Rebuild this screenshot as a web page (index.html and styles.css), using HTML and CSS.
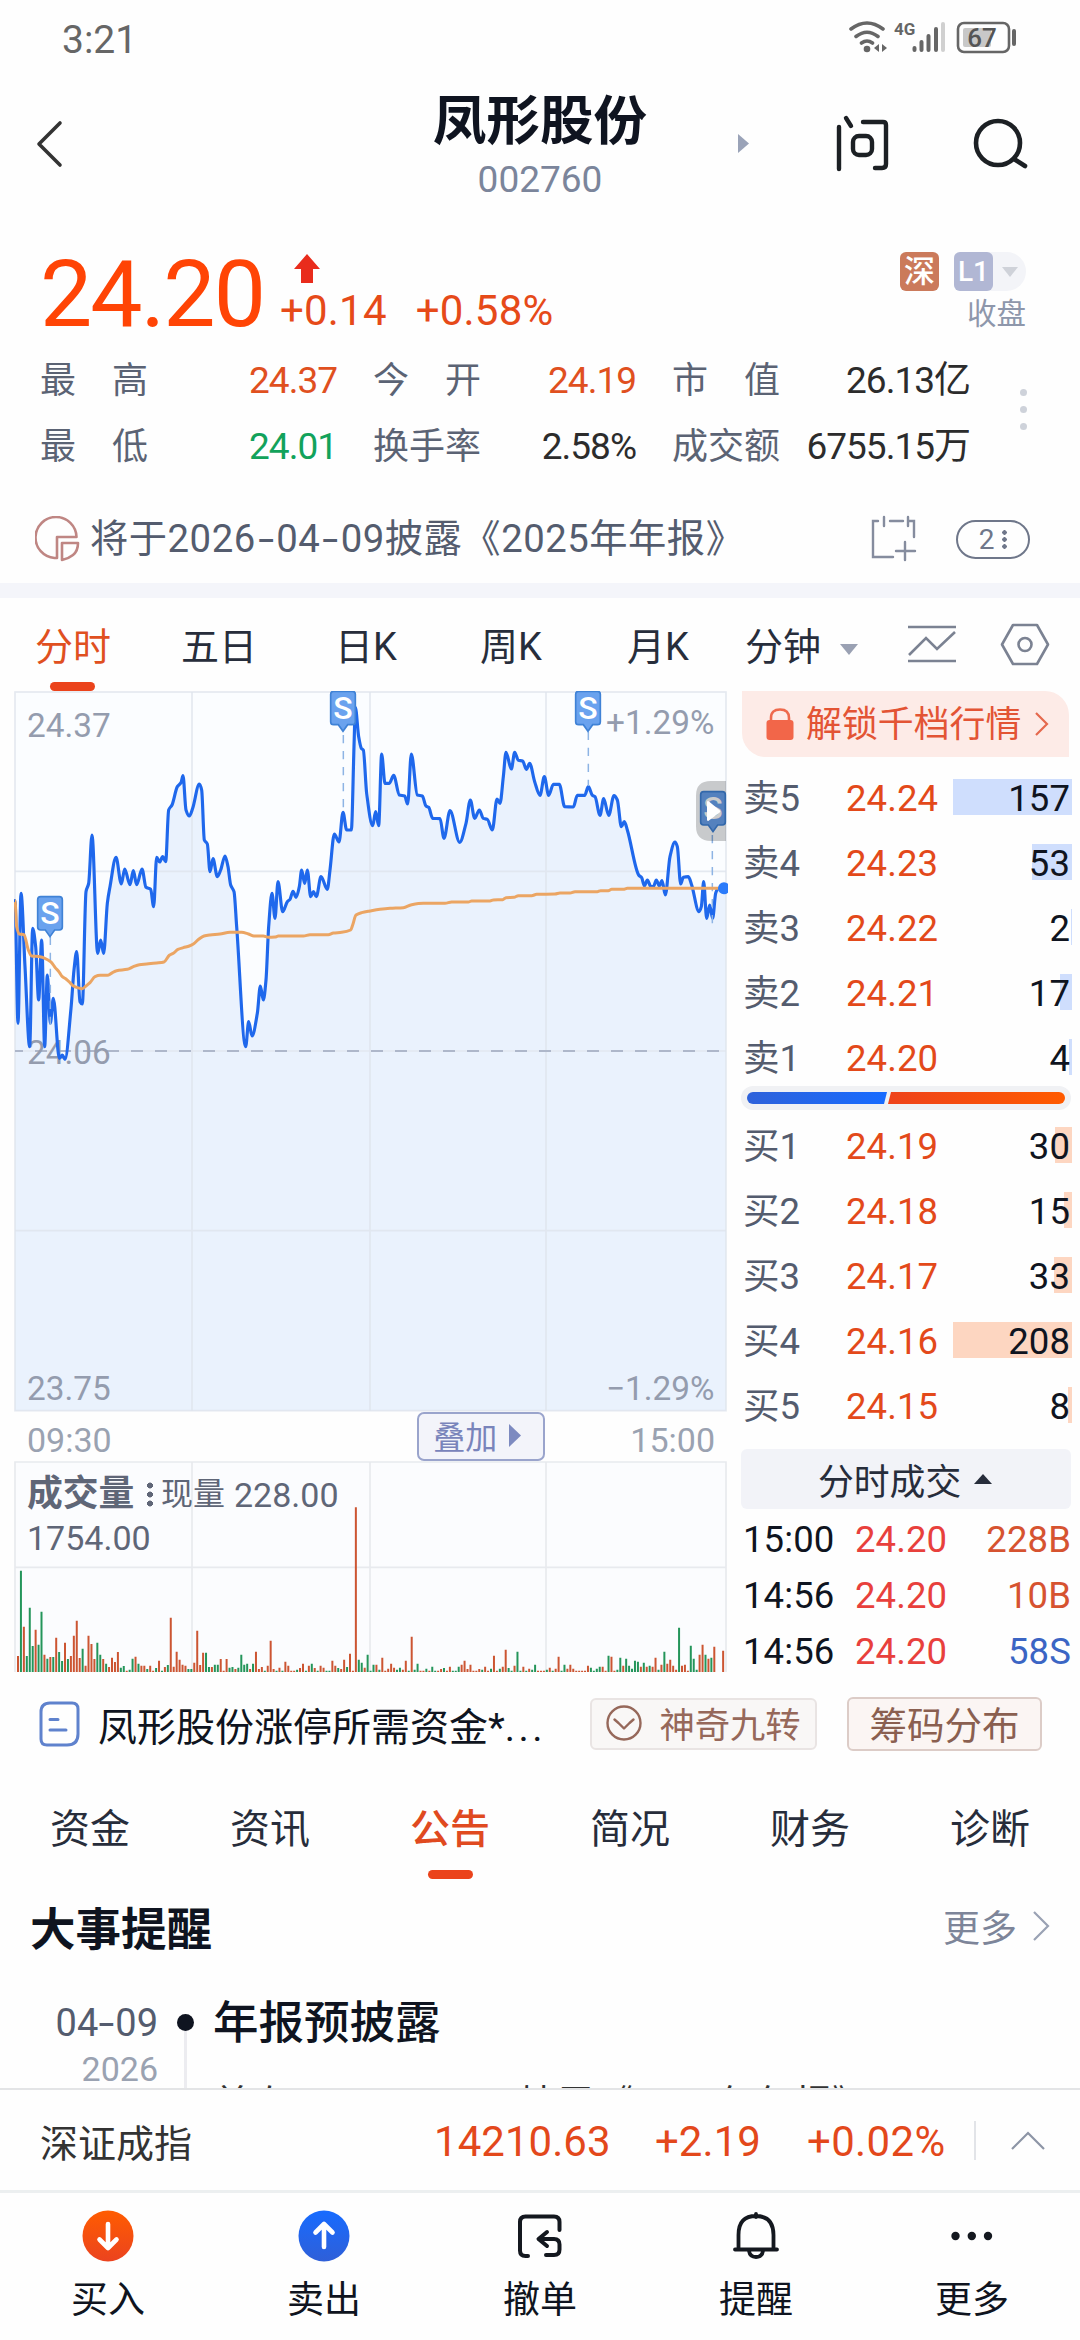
FILE: index.html
```html
<!DOCTYPE html>
<html lang="zh-CN">
<head>
<meta charset="utf-8">
<title>凤形股份 002760</title>
<link rel="stylesheet" href="styles.css">
</head>
<body>
<main class="screen">
  <div class="status">
    <span class="clock">3:21</span>
    <svg class="status-icons" width="172" height="40" viewBox="846 18 172 40" fill="none" stroke="#666">
      <g stroke-width="3.6" stroke-linecap="round"><path d="M851 29Q867 17 883 29M856 36.500Q867 28 878 36.500M861.500 43Q867 39 872.500 43"/></g>
      <circle cx="867" cy="49" r="3.300" fill="#666" stroke="none"/>
      <path d="M879 44v8l-5-4zM882 44v8l5-4z" fill="#666" stroke="none"/>
      <g stroke-width="4" stroke-linecap="round"><path d="M914.500 48v2M921.500 42v8M928.500 36v14M936 29v21"/><path stroke="#d0d0d0" d="M943 24v26"/></g>
      <rect x="958" y="23" width="51" height="29" rx="6" stroke-width="2.600"/>
      <rect x="963" y="28" width="28" height="19" rx="2" fill="#c8c8c8" stroke="none"/>
      <path d="M1014 31v13" stroke-width="4" stroke-linecap="round"/>
      <text x="894" y="35" class="net">4G</text>
      <text x="982" y="46.500" class="batt">67</text>
    </svg>
  </div>

  <header class="header">
    <svg class="back" width="30" height="50" viewBox="35 119 30 50" fill="none" stroke="#333" stroke-width="3.600" stroke-linecap="round" stroke-linejoin="round"><path d="M60 123L39 144l21 21"/></svg>
    <div class="title"><h1>凤形股份</h1><p>002760</p></div>
    <div class="head-actions">
      <svg class="next" width="11" height="19" viewBox="0 0 11 19"><path d="M0 0l11 9.500L0 19z" fill="#9aa3b8"/></svg>
      <svg class="ask" width="56" height="60" viewBox="834 114 56 60" fill="none" stroke="#1c2024" stroke-width="4.400" stroke-linecap="round" stroke-linejoin="round"><path d="M838 127v42M845 118l5 8M862 122h20q3 0 3 3v39q0 4-4 4h-7"/><rect x="852" y="136" width="19" height="19" rx="6"/></svg>
      <svg class="search" width="58" height="54" viewBox="971 117 58 54" fill="none" stroke="#1c2024" stroke-width="4.600" stroke-linecap="round"><circle cx="997" cy="143" r="22"/><path d="M1013 159l11 7"/></svg>
    </div>
  </header>

  <section class="quote">
    <div class="price">24.20</div>
    <div class="delta">
      <svg width="28" height="30" viewBox="0 0 28 30"><path d="M14 0l13 15h-7v14H8V15H1z" fill="#e92c1c"/></svg>
      <div><span>+0.14</span><span>+0.58%</span></div>
    </div>
    <div class="market">
      <div class="badges"><b class="sz">深</b><span class="lv"><b>L1</b><i class="tri-down"></i></span></div>
      <span class="closed">收盘</span>
    </div>
  </section>

  <section class="stats">
    <dl>
      <dt>最<i></i>高</dt><dd class="up">24.37</dd><dt>今<i></i>开</dt><dd class="up">24.19</dd><dt>市<i></i>值</dt><dd>26.13亿</dd>
      <dt>最<i></i>低</dt><dd class="down">24.01</dd><dt>换手率</dt><dd>2.58%</dd><dt>成交额</dt><dd>6755.15万</dd>
    </dl>
    <div class="vdots"><i></i><i></i><i></i></div>
  </section>

  <section class="notice">
    <svg width="45" height="46" viewBox="34 516 45 46" fill="none" stroke="#bf8683" stroke-width="2.600" stroke-linejoin="round"><path d="M53.500 558a20.500 20.500 0 1 1 22-21H56v21z"/><path d="M61 543h16q0 8-5 12t-11 5z"/></svg>
    <p>将于2026<u>-</u>04<u>-</u>09披露《2025年年报》</p>
    <svg class="cal" width="48" height="48" viewBox="869 514 48 48" fill="none" stroke="#858c9e" stroke-width="2.400" stroke-linecap="round"><path d="M878 520h-5v36h20M890 520h13M909 520h5v16M884 516v9M908 516v9M905 541v18M896 550h19"/></svg>
    <span class="count">2<i></i></span>
  </section>

  <nav class="periods">
    <a class="on">分时</a><a>五日</a><a>日K</a><a>周K</a><a>月K</a><a>分钟</a>
    <i class="tri-down"></i>
    <svg class="ind" width="50" height="40" viewBox="906 624 50 40" fill="none" stroke="#7b8292" stroke-width="2.600"><path d="M907 627h48M907 661h48M908 655l17-17 11 11 18-17"/></svg>
    <svg class="hex" width="50" height="46" viewBox="999 622 50 46" fill="none" stroke="#7b8292" stroke-width="2.600" stroke-linejoin="round"><path d="M1012 625h24l11 19.500-11 19.500h-24l-11-19.500z"/><circle cx="1024" cy="644.500" r="6.500"/></svg>
  </nav>

  <section class="trade">
    <div class="charts">
      <div class="price-chart">
        <svg id="price" viewBox="42 33 2142 2163" width="714" height="721">
          <rect x="45" y="36" width="2133" height="2156" fill="#fbfdff"/>
          <path id="area" fill="#eaf2fd"/>
          <g fill="none" stroke="#dfe4ec" stroke-opacity=".8" stroke-width="5"><rect x="45" y="36" width="2133" height="2156"/><path d="M576 36V2192M1110 36V2192M1638 36V2192M45 574H2178M45 1113H2178M45 1652H2178"/></g>
          <path d="M45 1113H2178" stroke="#aeb7ca" stroke-width="6" stroke-dasharray="36 36" stroke-dashoffset="12"/>
          <g class="axis"><text x="81" y="171">24.37</text><text x="81" y="1151">24.06</text><text x="81" y="2161">23.75</text><text x="2143" y="161" text-anchor="end">+1.29%</text><text x="2143" y="2161" text-anchor="end">−1.29%</text></g>
          <path id="line" fill="none" stroke="#1f68ec" stroke-width="9.500" stroke-linejoin="round" stroke-linecap="round"/>
          <path d="M151 770V1045M1030 165V395M1765 155V318M2137 465V730" stroke="#8db4e4" stroke-width="4.500" stroke-dasharray="25 23" fill="none"/>
          <path id="avg" fill="none" stroke="#eba563" stroke-width="9" stroke-linejoin="round"/>
          <circle cx="2172" cy="625" r="18" fill="#2b7bfa"/>
          <g class="marks">
            <g transform="translate(112 650)"><path d="M10 0h56q9 0 9 9v82q0 9-9 9H52l-14 20-14-20H10q-9 0-9-9V9q0-9 9-9z"/><text x="38" y="82">S</text></g>
            <g transform="translate(991 34)"><path d="M10 0h56q9 0 9 9v82q0 9-9 9H52l-14 20-14-20H10q-9 0-9-9V9q0-9 9-9z"/><text x="38" y="82">S</text></g>
            <g transform="translate(1726 34)"><path d="M10 0h56q9 0 9 9v82q0 9-9 9H52l-14 20-14-20H10q-9 0-9-9V9q0-9 9-9z"/><text x="38" y="82">S</text></g>
            <g transform="translate(2101 335)"><path d="M10 0h56q9 0 9 9v82q0 9-9 9H52l-14 20-14-20H10q-9 0-9-9V9q0-9 9-9z"/><text x="38" y="82">S</text></g>
          </g>
          <path d="M2178 303h-46q-44 0-44 44v92q0 44 44 44h46z" fill="#000" fill-opacity=".2"/>
          <path d="M2124 366l34 28-34 26z" fill="#fff" stroke="#fff" stroke-width="6" stroke-linejoin="round"/>
        </svg>
      </div>
      <div class="time-axis"><span>09:30</span><button>叠加<svg width="12" height="23" viewBox="0 0 12 23"><path d="M0 0l12 11.500L0 23z" fill="#7d8ac0"/></svg></button><span>15:00</span></div>
      <div class="volume-chart">
        <svg id="volume" viewBox="42 242 2142 636" width="714" height="212">
          <rect x="45" y="245" width="2133" height="630" fill="#fbfcfe"/>
          <path d="M45 875V245H2178V875M576 245V875M1110 245V875M1638 245V875M45 561H2178" fill="none" stroke="#e8eaee" stroke-width="5"/>
        </svg>
        <div class="vol-label"><b>成交量</b><i class="dots3"></i><span>现量</span><em>228.00</em></div>
        <div class="vol-max">1754.00</div>
      </div>
    </div>

    <aside class="book">
      <a class="unlock"><svg width="28" height="33" viewBox="0 0 28 33"><path d="M5 14V10q0-8.500 9-8.500T23 10v4" fill="none" stroke="#ee6a4d" stroke-width="2.600"/><rect x=".5" y="12" width="27" height="20" rx="3" fill="#f26649"/></svg><span>解锁千档行情</span><svg class="chev" width="14" height="24" viewBox="0 0 14 24" fill="none" stroke="#e5694e" stroke-width="2.200"><path d="M1 1l11 11L1 23"/></svg></a>
      <ul class="sell">
        <li><span>卖5</span><b>24.24</b><em><i style="width:119px"></i>157</em></li>
        <li><span>卖4</span><b>24.23</b><em><i style="width:40px"></i>53</em></li>
        <li><span>卖3</span><b>24.22</b><em><i style="width:1px"></i>2</em></li>
        <li><span>卖2</span><b>24.21</b><em><i style="width:12px"></i>17</em></li>
        <li><span>卖1</span><b>24.20</b><em><i style="width:3px"></i>4</em></li>
      </ul>
      <div class="ratio"><i class="sells"></i><i class="buys"></i></div>
      <ul class="buy">
        <li><span>买1</span><b>24.19</b><em><i style="width:17px"></i>30</em></li>
        <li><span>买2</span><b>24.18</b><em><i style="width:8px"></i>15</em></li>
        <li><span>买3</span><b>24.17</b><em><i style="width:18px"></i>33</em></li>
        <li><span>买4</span><b>24.16</b><em><i style="width:119px"></i>208</em></li>
        <li><span>买5</span><b>24.15</b><em><i style="width:4px"></i>8</em></li>
      </ul>
      <div class="ticks-head">分时成交<i class="tri-up"></i></div>
      <ul class="ticks">
        <li><span>15:00</span><b>24.20</b><em>228B</em></li>
        <li><span>14:56</span><b>24.20</b><em>10B</em></li>
        <li><span>14:56</span><b>24.20</b><em class="s">58S</em></li>
      </ul>
    </aside>
  </section>

  <section class="news">
    <svg width="41" height="46" viewBox="0 0 41 46" fill="none" stroke="#5f82cd" stroke-width="3" stroke-linecap="round"><path d="M11 2h22q6 0 6 6v25q0 11-11 11H8q-6 0-6-6V11q0-9 9-9z"/><path d="M11 18.500h8M11 29h16"/></svg>
    <p>凤形股份涨停所需资金*<span>...</span></p>
    <a class="chip magic"><svg width="36" height="36" viewBox="0 0 36 36" fill="none" stroke="#96685a" stroke-width="2.400" stroke-linecap="round" stroke-linejoin="round"><circle cx="18" cy="18" r="16.500"/><path d="M8.500 14.500l4 3.500 5.500 5.500L23.500 18l4-3.500"/></svg>神奇九转</a>
    <a class="chip chips">筹码分布</a>
  </section>

  <nav class="tabs"><a>资金</a><a>资讯</a><a class="on">公告</a><a>简况</a><a>财务</a><a>诊断</a></nav>

  <section class="events">
    <div class="ev-head"><h2>大事提醒</h2><span>更多</span><svg width="17" height="30" viewBox="0 0 17 30" fill="none" stroke="#9aa2b4" stroke-width="2.200"><path d="M1 1l14 14L1 29"/></svg></div>
    <div class="ev">
      <div class="ev-date"><span>04<u>-</u>09</span><small>2026</small></div>
      <div class="ev-rail"></div>
      <div class="ev-body"><h3>年报预披露</h3><p>首次于2026-04-09披露《2025年年报》</p></div>
    </div>
  </section>

  <section class="index">
    <span>深证成指</span><b class="v1">14210.63</b><b class="v2">+2.19</b><b class="v3">+0.02%</b><i></i>
    <svg width="34" height="20" viewBox="0 0 34 20" fill="none" stroke="#8d95a6" stroke-width="2.200"><path d="M1 18L17 2l16 16"/></svg>
  </section>

  <nav class="bottom">
    <a><svg width="52" height="52" viewBox="0 0 52 52"><defs><linearGradient id="go" x2="0" y2="1"><stop stop-color="#ff5c00"/><stop offset="1" stop-color="#eb431f"/></linearGradient></defs><circle cx="26" cy="26" r="25.500" fill="url(#go)"/><path d="M26 14v23M17.500 29.500L26 38l8.500-8.500" fill="none" stroke="#fff" stroke-width="4.600" stroke-linecap="round" stroke-linejoin="round"/></svg>买入</a>
    <a><svg width="52" height="52" viewBox="0 0 52 52"><defs><linearGradient id="gb" x2="0" y2="1"><stop stop-color="#176bff"/><stop offset="1" stop-color="#2f5fd8"/></linearGradient></defs><circle cx="26" cy="26" r="25.500" fill="url(#gb)"/><path d="M26 37V15M17.500 22.500L26 14l8.500 8.500" fill="none" stroke="#fff" stroke-width="4.600" stroke-linecap="round" stroke-linejoin="round"/></svg>卖出</a>
    <a><svg width="52" height="52" viewBox="0 0 52 52" fill="none" stroke="#14181f" stroke-width="4" stroke-linecap="round" stroke-linejoin="round"><path d="M14 46h-2.500q-5.500 0-5.500-5.500V12q0-5.500 5.500-5.500H40q5.500 0 5.500 5.500v8M33 22l-8.500 7 8.500 7M26 29h14q5.500 0 5.500 5.500v5q0 5.500-5.500 5.500h-8"/></svg>撤单</a>
    <a><svg width="52" height="52" viewBox="0 0 52 52" fill="none" stroke="#14181f" stroke-width="3.800" stroke-linecap="round" stroke-linejoin="round"><path d="M26 4v3M8.500 39V25q0-19 17.500-19t17.500 19v14M5 39.500h42M19 41q1 6 7 6t7-6"/></svg>提醒</a>
    <a><svg width="52" height="52" viewBox="0 0 52 52" fill="#14181f"><circle cx="9.500" cy="26" r="4.200"/><circle cx="25.800" cy="26" r="4.200"/><circle cx="42" cy="26" r="4.200"/></svg>更多</a>
  </nav>
</main>
<script src="chart.js"></script>
</body>
</html>
```

FILE: styles.css
```css
* { box-sizing: border-box; margin: 0; padding: 0; }
body { width: 1080px; background: #fefefe; color: #0f1420; font-family: Roboto, "Noto Sans CJK SC", sans-serif; }
i, em { font-style: normal; }
u { display: inline-block; width: 20.500px; text-align: center; text-decoration: none; letter-spacing: 0; transform: scaleX(1.500); line-height: 1; }
ul { list-style: none; }
svg { display: block; flex: none; }
.screen { width: 1080px; height: 2340px; overflow: hidden; display: flex; flex-direction: column; }
.screen > * { flex: none; }

.status { height: 80px; display: flex; justify-content: space-between; padding: 18px 62px 0 62px; }
.clock { font-size: 39px; line-height: 45px; color: #666; }
.net { font: 700 17px Roboto; fill: #666; stroke: none; }
.batt { font: 500 26px Roboto; fill: #555; stroke: none; text-anchor: middle; }

.header { height: 145px; display: grid; grid-template-columns: 345px 390px 345px; }
.back { margin: 39px 0 0 35px; }
.title { text-align: center; }
.title h1 { font-size: 53.500px; line-height: 64px; margin-top: 10px; font-weight: 700; }
.title p { font-size: 37px; line-height: 44px; margin-top: 4px; color: #7b859b; }
.head-actions { display: flex; align-items: flex-start; padding-left: 2px; }
.next { margin: 54px 86px 0 1px; }
.ask { margin-top: 34px; }
.search { margin: 37px 0 0 81px; }

.quote { height: 123px; display: flex; }
.price { width: 241px; padding-left: 40px; font-size: 93px; line-height: 100px; margin-top: 20px; letter-spacing: -1.900px; color: #ff4405; }
.delta { flex: 1; padding: 29px 0 0 39px; color: #e64a19; }
.delta svg { margin-left: 13px; }
.delta div { display: flex; gap: 29px; font-size: 42px; line-height: 50px; margin-top: 2px; letter-spacing: .2px; }
.market { width: 140px; margin-right: 54px; padding-top: 27px; display: flex; flex-direction: column; align-items: flex-end; }
.badges { display: flex; gap: 15px; }
.badges b { width: 39px; height: 39px; border-radius: 6px; color: #fff; font-size: 31px; line-height: 40px; text-align: center; font-weight: 500; }
.sz { background: #cb7a5b; }
.lv { display: flex; align-items: center; background: #f3f4f8; border-radius: 6px 20px 20px 6px; width: 72px; }
.badges .lv b { background: #b1b7d4; font-size: 28px; }
.tri-down { border: solid transparent; border-width: 11px 9px 0; border-top-color: #9aa1b3; }
.lv .tri-down { border-width: 10px 8px 0; border-top-color: #cfd2d9; margin-left: 9px; }
.closed { font-size: 29.500px; line-height: 34px; margin-top: 6px; color: #8e97ab; }

.stats { height: 131px; display: flex; }
.stats dl { width: 970px; padding-left: 40px; display: grid; grid-template-columns: 107px 226px 107px 192px 107px 191px; grid-auto-rows: 66px; font-size: 37px; line-height: 66px; }
.stats dt { font-size: 36px; color: #5b6374; white-space: nowrap; }
.stats dt i { display: inline-block; width: 36px; }
.stats dd { text-align: right; color: #2c2c2c; letter-spacing: -1px; white-space: nowrap; }
.stats dd:nth-of-type(3n+1), .stats dd:nth-of-type(3n+2) { padding-right: 36px; }
.stats .up { color: #e0501f; }
.stats .down { color: #12a25b; }
.vdots { padding: 41px 0 0 50px; display: grid; gap: 10px; align-content: start; }
.vdots i { width: 7px; height: 7px; border-radius: 50%; background: #ced2da; }

.notice { height: 119px; border-bottom: 15px solid #f4f5fa; padding: 16px 0 0 35px; display: flex; align-items: center; }
.notice p { width: 779px; padding-left: 10px; font-size: 38.300px; letter-spacing: .5px; color: #545c6e; white-space: nowrap; line-height: 50px; }
.notice .cal { margin: 0 39px 0 10px; }
.count { width: 74px; height: 39px; border: 2.500px solid #6f778a; border-radius: 20px; display: flex; align-items: center; justify-content: center; gap: 8px; font-size: 28px; color: #6f778a; }
.count i { width: 5px; height: 21px; background: radial-gradient(circle, #6f778a 2px, transparent 2.500px) 0 0 / 5px 7px; }

.periods { height: 93px; display: flex; padding-left: 35px; font-size: 38px; line-height: 99px; color: #272d3b; }
.periods a { white-space: nowrap; width: 146px; }
.periods a:nth-of-type(2) { width: 154px; }
.periods a:nth-of-type(3) { width: 145px; }
.periods a:nth-of-type(4) { width: 147px; }
.periods a:nth-of-type(5) { width: 118px; }
.periods a:nth-of-type(6) { width: 95px; }
.periods .on { position: relative; color: #e0501f; }
.on::after { content: ""; position: absolute; left: 15px; bottom: 0; width: 45px; height: 9px; border-radius: 4.500px; background: #eb431b; }
.periods .tri-down { height: 11px; margin-top: 46px; }
.ind { margin: 26px 0 0 49px; }
.hex { margin: 24px 0 0 43px; }

.trade { height: 987px; display: flex; }
.charts { width: 741px; padding-left: 14px; }
.axis { font-size: 100px; fill: #949cae; }
.marks path { fill: #6aa2ee; stroke: #3f82d6; stroke-width: 5; }
.marks text { fill: #fff; font-size: 96px; text-anchor: middle; font-weight: 500; }
.time-axis { height: 50px; width: 701px; padding-left: 13px; display: flex; align-items: center; font-size: 34px; color: #9aa2b1; }
.time-axis span { padding-top: 5px; }
.time-axis button { font: 32px Roboto, "Noto Sans CJK SC", sans-serif; width: 128px; height: 49px; margin: 0 auto 1px 305px; border: 2px solid #9aa4cc; border-radius: 7px; background: #f3f4fa; color: #7984bb; display: flex; align-items: center; justify-content: center; gap: 12px; padding: 0 7px 3px 0; }
.volume-chart { position: relative; margin-top: -1px; }
.vol-label, .vol-max { position: absolute; left: 13px; color: #5f6677; line-height: 40px; white-space: nowrap; }
.vol-label { top: 12px; display: flex; align-items: center; font-size: 34px; }
.vol-label b { font-size: 35.800px; width: 120px; }
.vol-label span { font-size: 32px; width: 73px; margin-left: 8px; }
.dots3 { width: 6px; height: 27px; background: radial-gradient(circle, #5f6677 2.800px, transparent 3.200px) 0 0 / 6px 9px; }
.vol-label em { padding-top: 2px; }
.vol-max { top: 57px; font-size: 34px; }

.unlock { margin-left: 1px; width: 327px; height: 66px; background: #fdebe7; border-radius: 0 24px 0 24px; display: flex; align-items: center; padding-left: 24px; font-size: 35.900px; line-height: 60px; color: #e35434; }
.unlock span { margin-left: 12px; margin-top: 2px; white-space: nowrap; }
.chev { margin-left: 14px; }
.sell { padding-top: 9px; height: 327px; }
.book li { display: grid; grid-template-columns: 103px 110px 116px; width: 330px; padding-left: 2px; font-size: 36.500px; line-height: 66px; height: 65px; letter-spacing: .1px; }
.book li span { color: #545c6e; white-space: nowrap; }
.book li b { font-weight: 400; color: #e3491a; }
.book li em { position: relative; z-index: 0; text-align: right; padding-right: 2px; }
.book li em i { position: absolute; right: 0; top: 13px; height: 36px; background: #cfdefd; z-index: -1; }
.book .buy em i { background: #fdd6c1; }
.ratio { width: 330px; height: 24px; border-radius: 12px; background: #f0f1f4; padding: 6px; display: flex; margin-top: 2px; }
.ratio i { height: 12px; }
.ratio .sells { width: 140px; border-radius: 6px 0 0 6px; background: linear-gradient(90deg, #2f62da, #176bff); clip-path: polygon(0 0, 100% 0, calc(100% - 3px) 100%, 0 100%); }
.ratio .buys { width: 178px; border-radius: 0 6px 6px 0; background: linear-gradient(90deg, #ee421b, #ff5b00); clip-path: polygon(4px 0, 100% 0, 100% 100%, 1px 100%); }
.buy { padding-top: 4px; height: 339px; }
.ticks-head { width: 330px; height: 60px; border-radius: 6px; background: #f2f3f8; padding: 0 0 1px 77px; display: flex; align-items: center; gap: 13px; font-size: 35.800px; color: #272d3b; }
.tri-up { border: solid transparent; border-width: 0 9px 10px; border-bottom-color: #272d3b; }
.ticks { padding-top: 2px; }
.book .ticks li { grid-template-columns: 112px 100px 116px; height: 56px; line-height: 57px; }
.book .ticks span { color: #0f1420; }
.book .ticks b { color: #e8403c; }
.book .ticks em { color: #d65330; padding: 0; }
.book .ticks em.s { color: #3b65c4; }

.news { height: 93px; display: flex; align-items: center; padding: 0 0 1px 39px; }
.news p { width: 510px; padding-left: 18px; font-size: 39px; white-space: nowrap; }
.news p span { letter-spacing: 3.500px; }
.chip { display: flex; align-items: center; justify-content: center; border: 2px solid #e9e4e3; border-radius: 6px; background: #f9f7f6; color: #96685a; white-space: nowrap; padding-bottom: 3px; }
.magic { width: 227px; height: 52px; font-size: 35.300px; gap: 17px; }
.chips { width: 195px; height: 54px; margin-left: 30px; border-color: #dcccc7; background: #fbf5f3; font-size: 37.500px; color: #8a5f50; }

.tabs { height: 107px; display: grid; grid-template-columns: repeat(6, 180px); text-align: center; font-size: 40px; line-height: 117px; color: #272d3b; }
.tabs a { position: relative; }
.tabs .on { color: #e04a20; font-weight: 500; }
.tabs .on::after { left: 68px; bottom: 9px; }

.events { height: 212px; overflow: hidden; border-bottom: 2px solid #e3e4e6; }
.ev-head { height: 102px; display: flex; align-items: center; padding: 0 30px 6px 30px; }
.ev-head h2 { font-size: 45.500px; flex: 1; }
.ev-head span { font-size: 37px; color: #7d8599; margin-right: 16px; }
.ev { display: grid; grid-template-columns: 158px 55px 1fr; }
.ev-date { text-align: right; line-height: 46px; padding-top: 20px; }
.ev-date span { display: block; font-size: 38px; line-height: 46px; height: 46px; color: #545c6e; }
.ev-date u { width: 17px; }
.ev-date small { display: block; font-size: 34px; color: #9aa2b1; }
.ev-rail { position: relative; background: linear-gradient(#ececf0, #ececf0) 26px 42px / 3px 80px no-repeat; }
.ev-rail::before { content: ""; position: absolute; left: 19px; top: 34px; width: 17px; height: 17px; border-radius: 50%; background: #0f1420; }
.ev-body h3 { font-size: 45.500px; font-weight: 500; line-height: 60px; margin-top: 14px; }
.ev-body p { font-size: 38px; line-height: 50px; margin-top: 25px; color: #333; }

.index { height: 103px; border-bottom: 3px solid #eceff0; display: flex; align-items: center; padding: 1px 0 0 40px; font-size: 38px; color: #333; }
.index span { width: 394px; }
.index b { font-weight: 400; font-size: 41.900px; color: #e3481b; white-space: nowrap; letter-spacing: .1px; padding-top: 2px; }
.index .v1 { width: 221px; }
.index .v2 { width: 152px; }
.index .v3 { width: 167px; letter-spacing: .4px; }
.index i { width: 2px; height: 39px; background: #e2e4e8; margin-right: 35px; }

.bottom { height: 147px; display: grid; grid-template-columns: repeat(5, 216px); }
.bottom a { display: flex; flex-direction: column; align-items: center; padding-top: 17px; font-size: 37px; line-height: 50px; }
.bottom svg { margin-bottom: 14px; }
```

FILE: chart.js
```js
// Price and average series; three units per pixel, y grows downwards.
const price = "45,662 54,1030 63,640 75,860 89,1100 98,745 107,800 116,960 125,780 134,1100 142,885 151,1030 160,955 178,1135 187,1125 195,1138 213,985 222,870 230,815 240,965 247,972 258,635 266,610 276,465 293,820 302,780 311,820 322,670 330,620 348,532 364,612 374,567 390,614 400,572 410,614 426,567 438,622 452,628 461,680 470,532 479,546 488,530 497,545 506,390 516,375 532,320 543,308 549,287 558,390 568,408 578,385 598,312 605,330 613,480 622,492 630,575 639,536 652,590 662,570 675,528 684,560 692,615 702,635 710,740 737,1100 746,1025 756,1068 772,1000 781,918 790,960 798,900 806,740 816,640 825,715 834,605 848,695 862,665 870,658 879,634 888,652 898,620 905,570 914,610 922,570 932,650 940,635 949,650 963,590 982,628 990,570 1003,462 1017,486 1029,397 1040,450 1054,450 1062,200 1066,82 1076,170 1084,205 1090,210 1100,340 1118,437 1127,395 1136,437 1145,222 1155,310 1168,310 1181,286 1198,345 1214,348 1223,372 1234,222 1252,345 1267,348 1278,378 1286,382 1298,415 1320,416 1332,475 1350,392 1379,487 1398,430 1411,360 1424,415 1438,390 1450,415 1462,418 1477,450 1491,357 1500,370 1510,290 1518,217 1534,267 1544,217 1555,241 1568,243 1579,268 1589,250 1604,305 1620,346 1633,290 1646,346 1660,313 1678,313 1694,380 1720,381 1732,346 1754,346 1765,320 1777,346 1785,350 1800,406 1811,356 1826,406 1842,347 1852,360 1864,440 1873,425 1882,450 1916,585 1925,593 1933,618 1942,600 1953,620 1960,620 1969,600 1978,618 1986,602 1996,645 2010,530 2025,486 2032,500 2042,612 2050,592 2065,590 2075,615 2097,695 2104,680 2111,605 2120,715 2129,675 2138,715 2147,640 2154,626 2172,626";
const average = "45,662 50,740 58,762 72,764 85,810 95,828 120,830 152,845 165,862 178,877 187,890 198,897 210,908 220,918 232,923 247,926 258,918 270,908 285,890 300,886 322,886 334,880 350,872 382,868 400,860 418,854 440,852 470,849 492,846 508,826 520,820 534,808 550,803 568,798 580,792 596,778 612,768 630,765 660,762 690,757 725,757 745,762 762,768 790,768 805,772 825,771 835,768 910,768 930,764 985,764 1000,759 1025,757 1052,750 1058,735 1068,705 1085,698 1110,693 1140,688 1170,685 1210,683 1235,674 1270,670 1335,670 1355,666 1405,666 1415,663 1470,663 1480,660 1508,659 1518,653 1542,652 1555,647 1595,647 1610,643 1665,642 1680,639 1710,639 1725,635 1792,635 1802,632 1825,632 1835,628 1870,628 1882,625 2172,625";

// Smooth curve that never overshoots a local high or low.
function curve(text) {
  const p = text.split(" ").map(s => s.split(",").map(Number));
  const slope = i => (p[i + 1][1] - p[i][1]) / (p[i + 1][0] - p[i][0]);
  const m = p.map((_, i) => {
    if (i === 0 || i === p.length - 1) return 0;
    const a = slope(i - 1), b = slope(i);
    return a * b <= 0 ? 0 : 2 * a * b / (a + b);
  });
  let d = `M${p[0]}`;
  for (let i = 1; i < p.length; i++) {
    const h = (p[i][0] - p[i - 1][0]) / 3;
    d += `C${p[i - 1][0] + h} ${p[i - 1][1] + m[i - 1] * h} ${p[i][0] - h} ${p[i][1] - m[i] * h} ${p[i]}`;
  }
  return d;
}
const path = curve(price);
document.getElementById("line").setAttribute("d", path);
document.getElementById("area").setAttribute("d", path + "L2178 626V2192H45Z");
document.getElementById("avg").setAttribute("d", curve(average));

// One bar per minute; a negative value is a falling minute.
const volumes = [48,-304,136,-48,-193,-78,127,-82,-181,52,-40,45,-45,103,-60,-33,88,-39,48,109,154,42,-70,19,109,84,39,-88,-52,39,-25,15,43,30,60,-13,-18,4,-7,-40,46,-25,19,19,-9,19,4,-12,34,-4,15,-21,163,16,61,37,22,19,-9,-9,28,124,21,58,-58,-15,15,-22,-22,39,4,39,-13,-15,9,-13,-52,-22,-25,9,-25,61,9,15,-4,19,94,9,-4,13,-4,31,19,4,4,-7,12,25,-4,19,-25,12,-4,19,13,-4,-4,34,19,-12,9,37,-15,55,4,494,-37,-28,13,-52,
-4,-22,22,-7,43,4,10,25,13,-7,-13,7,34,-4,106,-7,-25,4,4,-10,4,-16,-4,4,9,-12,4,16,-4,-4,-16,22,34,9,22,4,4,9,-7,16,4,-10,49,4,-10,16,67,-12,-4,19,-61,-4,16,-4,10,-7,-22,4,4,4,-7,13,-4,10,46,-4,-22,10,22,10,4,4,4,4,19,-13,-4,-10,-16,16,4,-49,46,4,-7,-43,19,-40,-19,-10,-34,-31,16,-28,16,-19,16,43,-7,22,-61,25,37,19,7,-133,19,22,4,-79,-40,-7,52,82,-52,40,-43,76,0,0,64];
const step = 8.814;
const up = [], down = [];
volumes.forEach((v, i) => {
  if (v) (v > 0 ? up : down).push(`M${(54 + step * i).toFixed(1)} 875v${-Math.abs(v)}`);
});
for (const [segments, color] of [[up, "#cc5532"], [down, "#24955a"]]) {
  const el = document.createElementNS("http://www.w3.org/2000/svg", "path");
  el.setAttribute("d", segments.join(""));
  el.setAttribute("stroke", color);
  el.setAttribute("stroke-width", "6");
  document.getElementById("volume").append(el);
}
```
